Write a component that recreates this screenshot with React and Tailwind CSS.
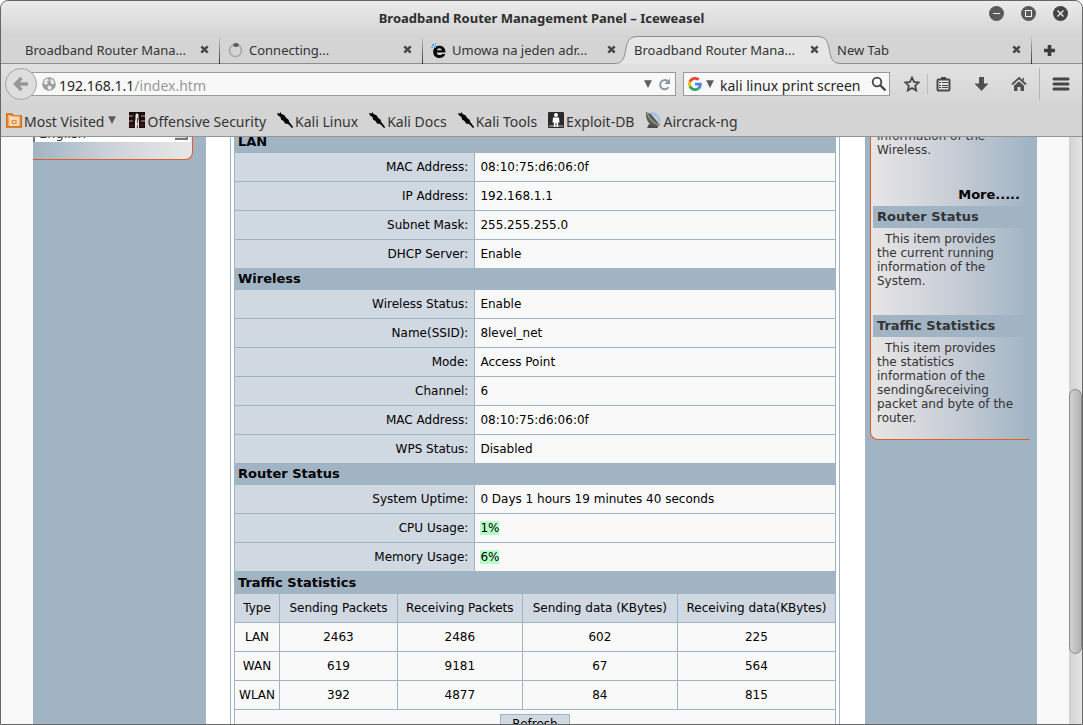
import { useState } from "react";

const sections = [
  {
    title: "LAN",
    rows: [
      ["MAC Address:", "08:10:75:d6:06:0f"],
      ["IP Address:", "192.168.1.1"],
      ["Subnet Mask:", "255.255.255.0"],
      ["DHCP Server:", "Enable"],
    ],
  },
  {
    title: "Wireless",
    rows: [
      ["Wireless Status:", "Enable"],
      ["Name(SSID):", "8level_net"],
      ["Mode:", "Access Point"],
      ["Channel:", "6"],
      ["MAC Address:", "08:10:75:d6:06:0f"],
      ["WPS Status:", "Disabled"],
    ],
  },
  {
    title: "Router Status",
    rows: [
      ["System Uptime:", "0 Days 1 hours 19 minutes 40 seconds"],
      ["CPU Usage:", "1%", true],
      ["Memory Usage:", "6%", true],
    ],
  },
];

const traffic = [
  ["LAN", "2463", "2486", "602", "225"],
  ["WAN", "619", "9181", "67", "564"],
  ["WLAN", "392", "4877", "84", "815"],
];

const bookmarks = [
  { label: "Offensive Security", icon: OffsecIcon },
  { label: "Kali Linux", icon: KaliIcon },
  { label: "Kali Docs", icon: KaliIcon },
  { label: "Kali Tools", icon: KaliIcon },
  { label: "Exploit-DB", icon: ExploitIcon },
  { label: "Aircrack-ng", icon: AircrackIcon },
];

function OffsecIcon() {
  return (
    <svg width="16" height="16" viewBox="0 0 16 16">
      <rect width="16" height="16" fill="#1d0d0d" />
      <path d="M0 3h4v2H0zM0 8h4v2H0zM12 3h4v2h-4zM12 8h4v2h-4z" fill="#6b5552" />
      <path d="M1 12h4v3H1zM11 12h4v3h-4z" fill="#3f1715" />
      <path d="M6.500 3c0-2 3-2 3 0v4l.5 2v7H8.800l-.5-5-.5 5H6V9l.5-2z" fill="#e9e4e0" />
      <path d="M8 6h.8v5H8z" fill="#222" />
    </svg>
  );
}

function KaliIcon() {
  return (
    <svg width="16" height="16" viewBox="0 0 16 16">
      <path d="M0 1l2.500.4L3.500 0l1 2 3 1.200 1.300 2.300 3 2.500.2 2.500 4 5-1.500-.5-3.500-3-3-.5L6.500 9 4 7.500 3.500 5 1 3.500z" fill="#050505" />
      <path d="M11 9.500l4.500 6" stroke="#050505" strokeWidth="1.500" />
    </svg>
  );
}

function ExploitIcon() {
  return (
    <svg width="16" height="16" viewBox="0 0 16 16">
      <rect width="16" height="16" rx="1" fill="#2a2a2a" />
      <path d="M1 13h14v2H1z" fill="#777" />
      <circle cx="8" cy="3" r="2" fill="#fff" />
      <path d="M5 5.500h6l.5 5h-1.300V15H8.500v-4h-1v4H5.800v-4.500H4.500z" fill="#fff" />
    </svg>
  );
}

function AircrackIcon() {
  return (
    <svg width="16" height="16" viewBox="0 0 16 16">
      <path d="M5 .7c6 0 9.500 3 10 9M8 2.800c3 .5 5 2.500 5.500 6" fill="none" stroke="#a9c3e6" strokeWidth="1.800" />
      <path d="M4 12l-2 4h11l-1-3z" fill="#4b4e48" />
      <path d="M1 0l5 2 9 11-2 1.500C5 15 0 8 1 0z" fill="#565b54" />
      <path d="M2 1c2 5 6 10 12 12" fill="none" stroke="#969b92" strokeWidth="1.500" />
    </svg>
  );
}

function Triangle() {
  return (
    <svg width="8" height="8" viewBox="0 0 8 8" className="shrink-0">
      <path d="M.5.5h7L4 7.500z" fill="#5a5a5a" stroke="#5a5a5a" strokeWidth=".5" />
    </svg>
  );
}

function CloseIcon() {
  return (
    <svg width="9" height="9" viewBox="0 0 9 9">
      <path d="M1.300 1.300l6.400 6.400M7.700 1.300L1.300 7.700" stroke="#474747" strokeWidth="2.400" />
    </svg>
  );
}

function Spinner() {
  return (
    <svg width="15" height="15" viewBox="0 0 15 15" className="shrink-0">
      <circle cx="7.500" cy="7.500" r="6" fill="none" stroke="#a8a8a8" strokeWidth="1.700" />
      <ellipse cx="8" cy="2" rx="2.800" ry="1.900" fill="#5c5c5c" />
    </svg>
  );
}

function ExplorerIcon() {
  return (
    <svg width="15" height="15" viewBox="0 0 15 15" className="shrink-0">
      <path
        d="M14.500 9.500H5.800c.2 1.800 1.300 2.600 2.800 2.600 1.200 0 2-.4 2.600-1.200h3.100c-.9 2.600-3 4-5.900 4-3.700 0-6.200-2.400-6.200-6s2.500-6.100 6.200-6.100 6.100 2.500 6.100 6.700zM5.900 7.300h5c-.2-1.300-1.100-2-2.500-2s-2.300.7-2.500 2z"
        fill="#0a0a0a"
        fillRule="evenodd"
      />
      <path d="M1 1h2v2H1zM4 0h1v2H4zM0 4h2v1H0zM3 3h2v2H3z" fill="#45a7dd" />
    </svg>
  );
}

function Tab({ title, icon, active, last }) {
  return (
    <div className={`relative flex h-7 min-w-0 flex-1 items-center ${active ? "z-10" : ""}`}>
      {active && (
        <div className="absolute -inset-x-3 inset-y-0 flex">
          <svg width="24" height="28" viewBox="0 0 24 28" className="shrink-0">
            <path d="M0 28v-.5c7 0 9.500-3 11-10C13 6 14 .5 24 .5V28z" fill="#e6e6e6" />
            <path d="M0 27.500c7 0 9.500-3 11-10C13 6 14 .5 24 .5" fill="none" stroke="#8d8d8d" />
          </svg>
          <div className="flex-1 border-t border-[#8d8d8d] bg-[#e6e6e6]" />
          <svg width="24" height="28" viewBox="0 0 24 28" className="shrink-0">
            <path d="M24 28v-.5c-7 0-9.500-3-11-10C11 6 10 .5 0 .5V28z" fill="#e6e6e6" />
            <path d="M24 27.500c-7 0-9.500-3-11-10C11 6 10 .5 0 .5" fill="none" stroke="#8d8d8d" />
          </svg>
        </div>
      )}
      <button className="relative flex min-w-0 flex-1 items-center gap-1.5 pl-2 text-left whitespace-nowrap">
        {icon}
        <span className="truncate pt-0.5">{title}</span>
      </button>
      <button aria-label="Close tab" className="relative mr-2.5 ml-2 pb-0.5">
        <CloseIcon />
      </button>
      {last && <span className="h-7 w-px bg-gradient-to-b from-[#d0d0d0] to-[#333]" />}
    </div>
  );
}

function TitleBar() {
  return (
    <header className="relative flex h-[35px] items-center justify-center rounded-t-md bg-gradient-to-b from-[#ebebeb] to-[#d4d4d4]">
      <h1 className="text-[13px] font-bold text-[#2e2e2e]">Broadband Router Management Panel – Iceweasel</h1>
      <div className="absolute top-[5px] right-3.5 flex gap-4">
        <button aria-label="Minimize">
          <svg width="16" height="16" viewBox="0 0 16 16">
            <circle cx="8.500" cy="7.500" r="7.500" fill="#5a5a5a" />
            <path d="M5 7.500h7" stroke="#f0f0f0" />
          </svg>
        </button>
        <button aria-label="Maximize">
          <svg width="16" height="16" viewBox="0 0 16 16">
            <circle cx="8.500" cy="7.500" r="7.500" fill="#5a5a5a" />
            <rect x="5.500" y="4.500" width="6" height="6" fill="none" stroke="#f0f0f0" />
          </svg>
        </button>
        <button aria-label="Close">
          <svg width="16" height="16" viewBox="0 0 16 16">
            <circle cx="8.500" cy="7.500" r="7.500" fill="#444" />
            <path d="M5.500 4.500l6 6M11.500 4.500l-6 6" stroke="#f0f0f0" strokeWidth="1.300" />
          </svg>
        </button>
      </div>
    </header>
  );
}

function NavBar() {
  const [query, setQuery] = useState("kali linux print screen");

  return (
    <div className="flex h-10 items-center bg-gradient-to-b from-[#e2e2e2] to-[#d5d5d5] pr-3 text-[14px]">
      <button aria-label="Back" className="z-10 ml-1 shrink-0">
        <svg width="32" height="32" viewBox="0 0 32 32">
          <circle cx="16" cy="16" r="15.500" fill="#dedede" stroke="#9aa5ae" />
          <path d="M10.500 16H23M16.500 10l-6 6 6 6" fill="none" stroke="#979797" strokeWidth="3.400" />
        </svg>
      </button>
      <div className="-ml-2 flex h-6 flex-1 items-center border border-[#9a9a9a] bg-[#f8f8f8] pr-1 pl-3">
        <svg width="14" height="14" viewBox="0 0 14 14" className="shrink-0">
          <circle cx="7" cy="7" r="6.800" fill="#9b9b9b" />
          <path d="M3 2.500l3-1 1 2-2 1 1 2-2 1.500L1.500 6zM8.500 1.500l3 2 1 3-2 1-2-2zM6 8.500l3 .5 1 2-2.500 2-2-2z" fill="#ececec" />
        </svg>
        <div className="ml-[3px] flex-1 pt-0.5 text-[#9a9a9a]">
          <span className="text-[#262626]">192.168.1.1</span>/index.htm
        </div>
        <button aria-label="Show history" className="mr-1.5">
          <Triangle />
        </button>
        <button aria-label="Reload">
          <svg width="13" height="13" viewBox="0 0 13 13">
            <path d="M10.500 9.300A4.600 4.600 0 1 1 9.500 3" fill="none" stroke="#8895a0" strokeWidth="1.900" />
            <path d="M12 .5v5.500H6.500z" fill="#8895a0" />
          </svg>
        </button>
      </div>
      <div className="ml-[7px] flex h-6 w-[207px] items-center border border-[#9a9a9a] bg-[#f8f8f8] pr-0.5 pl-1">
        <svg width="14" height="14" viewBox="0 0 48 48" className="shrink-0">
          <path fill="#EA4335" d="M24 9.500c3.540 0 6.710 1.220 9.210 3.600l6.850-6.850C35.900 2.380 30.470 0 24 0 14.620 0 6.510 5.380 2.560 13.220l7.980 6.190C12.430 13.720 17.740 9.500 24 9.500z" />
          <path fill="#4285F4" d="M46.980 24.550c0-1.570-.15-3.090-.38-4.550H24v9.020h12.940c-.58 2.960-2.260 5.480-4.780 7.180l7.730 6c4.510-4.180 7.090-10.360 7.090-17.650z" />
          <path fill="#FBBC05" d="M10.530 28.590c-.48-1.450-.76-2.990-.76-4.590s.27-3.140.76-4.590l-7.980-6.190C.92 16.460 0 20.120 0 24c0 3.880.92 7.540 2.560 10.780l7.970-6.190z" />
          <path fill="#34A853" d="M24 48c6.480 0 11.930-2.130 15.890-5.810l-7.730-6c-2.150 1.450-4.920 2.300-8.160 2.300-6.260 0-11.570-4.220-13.470-9.910l-7.980 6.190C6.510 42.620 14.620 48 24 48z" />
        </svg>
        <button aria-label="Choose search engine" className="ml-1">
          <Triangle />
        </button>
        <input
          type="text"
          aria-label="Search"
          value={query}
          onChange={(e) => setQuery(e.target.value)}
          className="ml-1.5 min-w-0 flex-1 bg-transparent pt-0.5 text-[#262626] focus:outline-none"
        />
        <button aria-label="Submit search">
          <svg width="16" height="16" viewBox="0 0 16 16">
            <circle cx="6" cy="6" r="4.300" fill="none" stroke="#444" strokeWidth="1.800" />
            <path d="M9 9l5.500 5.500" stroke="#444" strokeWidth="2.400" />
          </svg>
        </button>
      </div>
      <button aria-label="Bookmark this page" className="ml-3.5">
        <svg width="16" height="16" viewBox="0 0 16 16">
          <path d="M8 1.500l2 4.500 4.700.5-3.500 3.200 1 4.800L8 12l-4.200 2.500 1-4.800L1.300 6.500 6 6z" fill="none" stroke="#484848" strokeWidth="1.800" />
        </svg>
      </button>
      <span className="ml-[7px] h-5 w-px bg-[#bcbcbc]" />
      <button aria-label="Bookmarks list" className="ml-2">
        <svg width="15" height="16" viewBox="0 0 15 16">
          <path d="M5 1h5v3H5z" fill="#484848" />
          <rect x="1.500" y="3.500" width="12" height="11" rx="1" fill="#e2e2e2" stroke="#484848" strokeWidth="2" />
          <path d="M3 6.500h2M6 6.500h6M3 9.500h2M6 9.500h6M3 11.500h2M6 11.500h6" stroke="#484848" />
        </svg>
      </button>
      <button aria-label="Downloads" className="ml-[23px]">
        <svg width="15" height="16" viewBox="0 0 15 16">
          <path d="M5 1h5v6.500h4.500L7.500 15 .5 7.500H5z" fill="#505050" />
        </svg>
      </button>
      <button aria-label="Home" className="ml-[22px]">
        <svg width="16" height="16" viewBox="0 0 16 16">
          <path d="M1 8.500l7-6.500 7 6.500" fill="none" stroke="#505050" strokeWidth="1.800" />
          <path d="M3 9.800l5-4.500 5 4.500V15H9.500v-4h-3v4H3zM11.500 2H13v3l-1.500-1.300z" fill="#505050" />
        </svg>
      </button>
      <span className="ml-3 h-8 w-px bg-[#b0b5ba]" />
      <button aria-label="Open menu" className="ml-3">
        <svg width="18" height="16" viewBox="0 0 18 16">
          <path d="M2 3h14M2 8h14M2 13h14" stroke="#454545" strokeWidth="3" strokeLinecap="round" />
        </svg>
      </button>
    </div>
  );
}

function BookmarksBar() {
  return (
    <nav className="flex h-[33px] items-center gap-[11px] border-b border-[#949494] bg-[#d4d4d4] pl-[5px] text-[14px] whitespace-nowrap">
      <button className="mr-0.5 flex items-center gap-0.5">
        <svg width="16" height="16" viewBox="0 0 16 16">
          <path d="M.8 2h5l1.500 2h7.900v11H.8z" fill="#f3b06c" stroke="#d0650f" strokeWidth="1.500" />
          <rect x="4.500" y="7" width="7.500" height="6" fill="none" stroke="#fff3e4" strokeWidth="1.200" />
          <circle cx="8.200" cy="10" r="1.700" fill="#fff3e4" stroke="#d0650f" strokeWidth=".8" />
          <path d="M2.500 5h11" stroke="#fff3e4" />
        </svg>
        <span className="mr-0.5 pt-0.5">Most Visited</span>
        <Triangle />
      </button>
      {bookmarks.map(({ label, icon: Icon }) => (
        <a key={label} href="#" className="flex items-center gap-0.5">
          <Icon />
          <span className="pt-0.5">{label}</span>
        </a>
      ))}
    </nav>
  );
}

function HelpItem({ title, children }) {
  return (
    <>
      <h3 className="mx-0.5 h-[22px] bg-[#a1b4c3] px-1 text-[13px] leading-[22px] font-bold">{title}</h3>
      <p className="pt-1 pr-3.5 pl-1.5 indent-2">{children}</p>
    </>
  );
}

function StatusTable() {
  return (
    <table className="w-full table-fixed border-separate border-spacing-0 border-l border-[#a1b4c3]">
      <colgroup>
        <col className="w-2/5" />
        <col />
      </colgroup>
      {sections.map((section) => (
        <tbody key={section.title}>
          <tr>
            <th colSpan={2} className="h-[21px] bg-[#a1b4c3] px-[3px] pb-0.5 text-left text-[13px] leading-4">
              {section.title}
            </th>
          </tr>
          {section.rows.map(([label, value, highlight]) => (
            <tr key={label}>
              <th className="h-[29px] border-r border-b border-[#a1b4c3] bg-[#d0d8e2] px-1.5 text-right font-normal">
                {label}
              </th>
              <td className="h-[29px] border-r border-b border-[#a1b4c3] bg-[#f9f9f9] px-[5px]">
                {highlight ? <span className="bg-[#b5fcc8]">{value}</span> : value}
              </td>
            </tr>
          ))}
        </tbody>
      ))}
    </table>
  );
}

function TrafficTable() {
  return (
    <table className="w-full table-fixed border-separate border-spacing-0 border-l border-[#a1b4c3] text-center whitespace-nowrap">
      <colgroup>
        <col className="w-[7.5%]" />
        <col className="w-[19.6%]" />
        <col className="w-[20.8%]" />
        <col className="w-[25.8%]" />
        <col />
      </colgroup>
      <thead>
        <tr>
          <th colSpan={5} className="h-[22px] bg-[#a1b4c3] px-[3px] text-left text-[13px] leading-4">
            Traffic Statistics
          </th>
        </tr>
        <tr>
          {["Type", "Sending Packets", "Receiving Packets", "Sending data (KBytes)", "Receiving data(KBytes)"].map((h) => (
            <th key={h} className="h-[29px] border-r border-b border-[#a1b4c3] bg-[#d0d8e2] font-normal">
              {h}
            </th>
          ))}
        </tr>
      </thead>
      <tbody>
        {traffic.map((row) => (
          <tr key={row[0]}>
            {row.map((cell, i) => (
              <td key={i} className="h-[29px] border-r border-b border-[#a1b4c3] bg-[#f9f9f9]">
                {cell}
              </td>
            ))}
          </tr>
        ))}
        <tr>
          <td colSpan={5} className="border-r border-b border-[#a1b4c3] bg-[#f9f9f9] py-1">
            <button className="h-5 w-[70px] border border-[#a1b4c3] bg-[#d0d8e2]">Refresh</button>
          </td>
        </tr>
      </tbody>
    </table>
  );
}

function RouterPage() {
  const [lang, setLang] = useState("English");

  return (
    <div className="-mt-2 flex min-w-0 flex-1 bg-[#f9f9f9] px-8 font-['DejaVu_Sans',sans-serif] text-[12px] leading-[14px] text-black">
      <aside className="w-[173px] shrink-0 bg-[#a1b4c3]">
        <div className="mr-[13px] rounded-br-lg border-r border-b border-[#e35d24] bg-gradient-to-r from-[#a1b4c3] via-[#cdd3dc] to-[#e8e8e6] pr-0.5 pb-[17px]">
          <div className="relative -mt-1 h-[17px] border-l-2 border-[#777] bg-white">
            <select
              aria-label="Language"
              value={lang}
              onChange={(e) => setLang(e.target.value)}
              className="block h-[17px] w-full appearance-none bg-transparent pl-1 text-[13px] text-[#333] focus:outline-none"
            >
              <option>English</option>
            </select>
            <span className="pointer-events-none absolute right-0.5 bottom-0.5 h-3 w-[13px] border-r-2 border-b-2 border-[#777] bg-[#ddd]" />
          </div>
        </div>
      </aside>

      <main className="min-w-0 flex-1 bg-white pr-[25px] pl-6">
        <div className="h-full border-x border-[#a1b4c3] px-[3px] pt-[3px]">
          <StatusTable />
          <TrafficTable />
        </div>
      </main>

      <aside className="w-[172px] shrink-0 bg-[#a1b4c3] pr-[7px] pl-[5px] text-[#333]">
        <div className="rounded-bl-lg border-b border-l border-[#e35d24] bg-gradient-to-r from-[#e8e6e6] via-[#c9ced7] to-[#a1b4c3] pb-3.5">
          <p className="pr-3.5 pl-1.5">information of the Wireless.</p>
          <p className="mt-[31px] mb-1 pr-2.5 text-right text-[13px] font-bold text-black">
            <a href="#">More.....</a>
          </p>
          <HelpItem title="Router Status">This item provides the current running information of the System.</HelpItem>
          <div className="h-[27px]" />
          <HelpItem title="Traffic Statistics">
            This item provides the statistics information of the sending&amp;receiving packet and byte of the router.
          </HelpItem>
        </div>
      </aside>
    </div>
  );
}

export default function App() {
  return (
    <div className="flex h-screen flex-col overflow-hidden rounded-t-lg border border-[#666] bg-[#d4d4d4] font-['Noto_Sans',sans-serif] text-[13px] text-[#333]">
      <TitleBar />

      <div className="relative flex h-7 shrink-0 bg-[#d4d4d4] pl-4">
        <div className="absolute inset-x-0 bottom-0 h-px bg-[#8d8d8d]" />
        <Tab title="Broadband Router Mana..." last />
        <Tab title="Connecting..." icon={<Spinner />} last />
        <Tab title="Umowa na jeden adr..." icon={<ExplorerIcon />} />
        <Tab title="Broadband Router Mana..." active />
        <Tab title="New Tab" last />
        <button aria-label="New tab" className="flex w-[50px] items-center pl-3">
          <svg width="11" height="11" viewBox="0 0 11 11">
            <path d="M5.500 0v11M0 5.500h11" stroke="#3c3c3c" strokeWidth="3.600" />
          </svg>
        </button>
      </div>

      <NavBar />
      <BookmarksBar />

      <div className="flex min-h-0 flex-1 overflow-hidden">
        <RouterPage />
        <div className="flex w-[13px] shrink-0 flex-col bg-gradient-to-r from-[#d2d2d2] to-[#e4e4e4]">
          <div className="basis-[43%]" />
          <div className="basis-[45%] rounded-full border border-[#8a8a8a] bg-gradient-to-r from-[#d2d2d2] to-[#b2b2b2]" />
        </div>
      </div>
    </div>
  );
}
